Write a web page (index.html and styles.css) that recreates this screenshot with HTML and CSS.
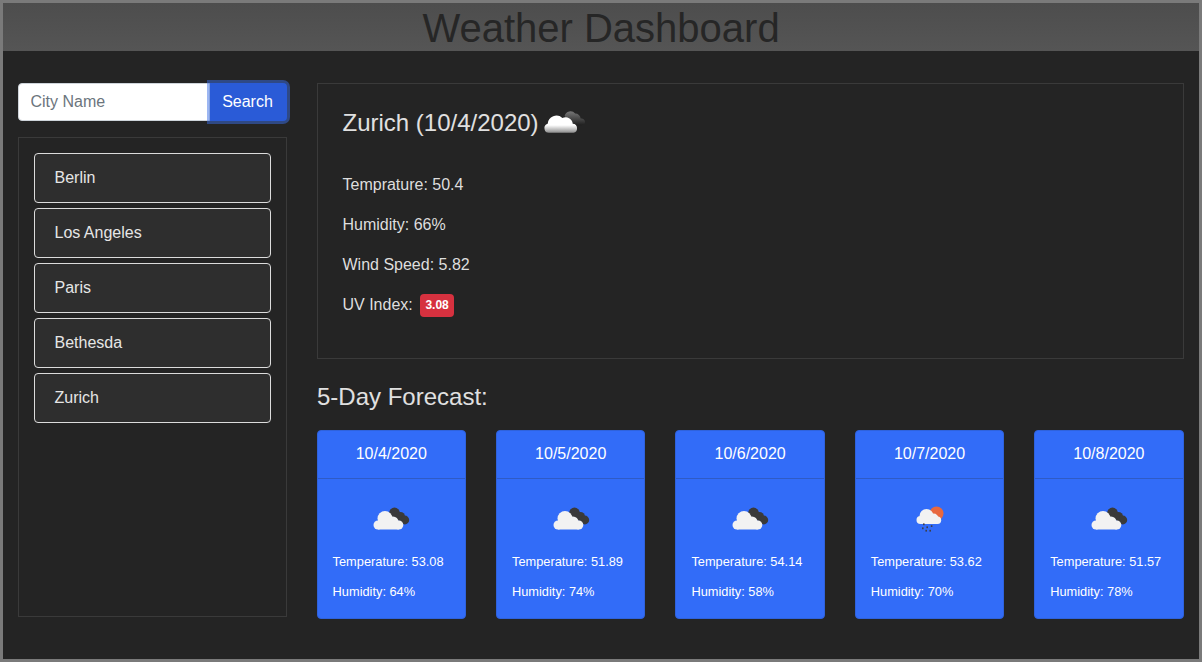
FILE: index.html
```html
<!DOCTYPE html>
<html lang="en">
<head>
    <meta charset="UTF-8">
    <meta name="viewport" content="width=device-width, initial-scale=1.0">
    <title>Weather Dashboard</title>
    <link rel="stylesheet" href="styles.css">
</head>
<body>
    <svg class="icon-defs" width="0" height="0" aria-hidden="true">
        <defs>
            <linearGradient id="white-fade" x1="0" y1="0" x2="0" y2="1">
                <stop offset="0.55" stop-color="#ffffff"/>
                <stop offset="1" stop-color="#8a8a8a"/>
            </linearGradient>
            <linearGradient id="dark-fade" x1="0" y1="0" x2="0" y2="1">
                <stop offset="0" stop-color="#777777"/>
                <stop offset="0.5" stop-color="#4a4a4a"/>
                <stop offset="1" stop-color="#1c1c1c"/>
            </linearGradient>
            <symbol id="icon-clouds" viewBox="0 0 50 50">
                <g fill="#3a3a3a">
                    <circle cx="28.5" cy="19" r="5.4"/>
                    <circle cx="34.5" cy="22.5" r="4.5"/>
                    <circle cx="38.8" cy="26" r="4.4"/>
                </g>
                <g fill="#f2f2f2">
                    <circle cx="19" cy="24.5" r="7.5"/>
                    <circle cx="12" cy="31" r="4.5"/>
                    <circle cx="27" cy="28" r="5.5"/>
                    <circle cx="32.8" cy="31" r="4.5"/>
                    <rect x="12" y="28" width="20.8" height="7.5"/>
                </g>
            </symbol>
            <symbol id="icon-clouds-large" viewBox="0 0 50 50">
                <path fill="url(#dark-fade)" d="M26 18a5.5 5.5 0 0 1 9.6-2a5 5 0 0 1 5 4.5a3.2 3.2 0 0 1 4 3a3 3 0 0 1-3 3L32 27z"/>
                <path fill="url(#white-fade)" d="M12 33.5a4.2 4.2 0 0 1-1.4-8.2a8 8 0 0 1 13.4-5.3a6.5 6.5 0 0 1 9.4 5.2a4.2 4.2 0 0 1 .6 8.3z"/>
            </symbol>
            <symbol id="icon-rain" viewBox="0 0 50 50">
                <circle cx="31.5" cy="19.5" r="7" fill="#e8683f"/>
                <g fill="#f2f2f2">
                    <circle cx="21.5" cy="22" r="7"/>
                    <circle cx="15.5" cy="26" r="4"/>
                    <circle cx="28.5" cy="24.5" r="5"/>
                    <circle cx="32.5" cy="26.3" r="3.7"/>
                    <rect x="15.5" y="24" width="17" height="6"/>
                </g>
                <g fill="#3d3d4a">
                    <rect x="18" y="29.4" width="1.6" height="1.8"/>
                    <rect x="17" y="33.4" width="1.6" height="1.8"/>
                    <rect x="21.4" y="32.4" width="1.6" height="1.8"/>
                    <rect x="20.4" y="35.8" width="1.6" height="1.8"/>
                    <rect x="25.8" y="31.2" width="1.6" height="1.8"/>
                    <rect x="24.4" y="35.8" width="1.6" height="1.8"/>
                </g>
            </symbol>
        </defs>
    </svg>

    <div class="frame">
        <header class="page-header">
            <h1>Weather Dashboard</h1>
        </header>

        <div class="page-body">
            <aside class="sidebar">
                <form class="search-row">
                    <input class="search-input" type="text" placeholder="City Name">
                    <button class="search-btn" type="button">Search</button>
                </form>
                <div class="city-list">
                    <div class="city-item">Berlin</div>
                    <div class="city-item">Los Angeles</div>
                    <div class="city-item">Paris</div>
                    <div class="city-item">Bethesda</div>
                    <div class="city-item">Zurich</div>
                </div>
            </aside>

            <main class="content">
                <section class="today">
                    <h2 class="today-title">
                        <span>Zurich (10/4/2020)</span>
                        <svg class="today-icon"><use href="#icon-clouds-large"/></svg>
                    </h2>
                    <p>Temprature: 50.4</p>
                    <p>Humidity: 66%</p>
                    <p>Wind Speed: 5.82</p>
                    <p>UV Index: <span class="badge">3.08</span></p>
                </section>

                <h3 class="forecast-title">5-Day Forecast:</h3>
                <div class="forecast">
                    <div class="card">
                        <div class="card-date">10/4/2020</div>
                        <div class="card-body">
                            <svg class="card-icon"><use href="#icon-clouds"/></svg>
                            <p>Temperature: 53.08</p>
                            <p>Humidity: 64%</p>
                        </div>
                    </div>
                    <div class="card">
                        <div class="card-date">10/5/2020</div>
                        <div class="card-body">
                            <svg class="card-icon"><use href="#icon-clouds"/></svg>
                            <p>Temperature: 51.89</p>
                            <p>Humidity: 74%</p>
                        </div>
                    </div>
                    <div class="card">
                        <div class="card-date">10/6/2020</div>
                        <div class="card-body">
                            <svg class="card-icon"><use href="#icon-clouds"/></svg>
                            <p>Temperature: 54.14</p>
                            <p>Humidity: 58%</p>
                        </div>
                    </div>
                    <div class="card">
                        <div class="card-date">10/7/2020</div>
                        <div class="card-body">
                            <svg class="card-icon"><use href="#icon-rain"/></svg>
                            <p>Temperature: 53.62</p>
                            <p>Humidity: 70%</p>
                        </div>
                    </div>
                    <div class="card">
                        <div class="card-date">10/8/2020</div>
                        <div class="card-body">
                            <svg class="card-icon"><use href="#icon-clouds"/></svg>
                            <p>Temperature: 51.57</p>
                            <p>Humidity: 78%</p>
                        </div>
                    </div>
                </div>
            </main>
        </div>
    </div>
</body>
</html>
```

FILE: styles.css
```css
* {
    margin: 0;
    padding: 0;
    box-sizing: border-box;
    font-family: "Liberation Sans", Arial, sans-serif;
}

html, body {
    height: 100%;
    overflow: hidden;
}

body {
    background-color: #242424;
    color: #e0e0e0;
}

.icon-defs {
    display: block;
    height: 0;
}

.frame {
    height: 662px;
    border: 3px solid #7a7a7a;
    background-color: #242424;
}

.page-header {
    height: 48px;
    background: linear-gradient(#4d4d4d, #555);
    text-align: center;
}

.page-header h1 {
    font-size: 40px;
    font-weight: 400;
    line-height: 50px;
    color: #262626;
}

.page-body {
    display: flex;
    padding: 32px 15px 0;
}

.sidebar {
    width: 269px;
    flex-shrink: 0;
    margin-right: 30px;
}

.search-row {
    display: flex;
    height: 38px;
    margin-bottom: 16px;
}

.search-input {
    flex-grow: 1;
    min-width: 0;
    padding: 0 11.5px;
    font-size: 16px;
    color: #495057;
    background-color: #fff;
    border: 1px solid #ced4da;
    border-radius: 4px 0 0 4px;
    outline: none;
}

.search-input::placeholder {
    color: #6c757d;
    opacity: 1;
}

.search-btn {
    width: 77px;
    flex-shrink: 0;
    padding-right: 2px;
    font-size: 16px;
    color: #fff;
    background-color: #2a5bd7;
    border: none;
    border-radius: 0 4px 4px 0;
    box-shadow: 0 0 0 3px rgba(58, 110, 230, 0.5);
}

.city-list {
    display: flex;
    flex-direction: column;
    gap: 5px;
    height: 480px;
    padding: 15px;
    border: 1px solid #3a3a3a;
}

.city-item {
    height: 50px;
    padding: 0 19.5px;
    line-height: 48px;
    font-size: 16px;
    color: #e6e6e6;
    background-color: #2e2e2e;
    border: 1px solid #dcdcdc;
    border-radius: 4px;
}

.content {
    flex-grow: 1;
    min-width: 0;
}

.today {
    height: 276px;
    padding: 24px 24.5px 0;
    border: 1px solid #3a3a3a;
}

.today-title {
    display: flex;
    align-items: center;
    height: 30px;
    margin-bottom: 35px;
    font-size: 24px;
    font-weight: 400;
    line-height: 30px;
    white-space: nowrap;
}

.today-icon {
    width: 55px;
    height: 55px;
    margin-left: -3px;
    flex-shrink: 0;
}

.today p {
    height: 24px;
    margin-bottom: 16px;
    font-size: 16px;
    line-height: 24px;
    color: #dedede;
}

.badge {
    display: inline-block;
    margin-left: 3px;
    padding: 4px 5.2px;
    font-size: 12px;
    font-weight: 700;
    line-height: 15px;
    vertical-align: middle;
    color: #fff;
    background-color: #d6313f;
    border-radius: 4px;
}

.forecast-title {
    margin: 24px 0 19px;
    font-size: 24px;
    font-weight: 400;
    line-height: 28px;
    color: #e0e0e0;
}

.forecast {
    display: grid;
    grid-template-columns: repeat(5, 1fr);
    gap: 30px;
    margin: 0 0.4px 0 -0.4px;
}

.card {
    height: 189px;
    color: #fff;
    background-color: #326cf8;
    border: 1px solid #2f62dc;
    border-radius: 4px;
}

.card-date {
    height: 48px;
    line-height: 46px;
    font-size: 16px;
    text-align: center;
    border-bottom: 1px solid #2f5bc6;
}

.card-body {
    padding: 15px 15px 0;
}

.card-icon {
    display: block;
    width: 50px;
    height: 50px;
    margin: 0 auto 10px;
}

.card-body p {
    height: 15px;
    margin-bottom: 15px;
    font-size: 12.8px;
    line-height: 15px;
}
```
